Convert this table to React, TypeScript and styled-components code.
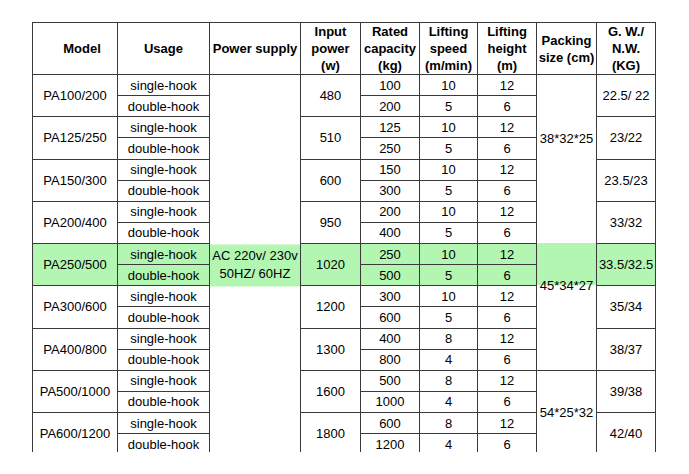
import React from 'react';
import styled, { createGlobalStyle } from 'styled-components';

const GlobalStyle = createGlobalStyle`
    html, body {
        margin: 0;
        padding: 0;
        background: #ffffff;
    }
    body {
        font-family: "Liberation Sans", Arial, sans-serif;
        color: #000;
    }
`;

const ROW_H = 21.125;
const GREEN = '#b2f6b2';
const LINE = '1px solid #3a3a3a';

const Page = styled.div`
    padding: 22px 0 0 32px;
    height: 452px;
    box-sizing: border-box;
    overflow: hidden;
`;

const Sheet = styled.table`
    border-collapse: collapse;
    table-layout: fixed;
    width: 623px;
    font-size: 13px;
`;

const HeadRow = styled.tr`
    height: 52px;
`;

const BodyRow = styled.tr`
    height: ${ROW_H}px;
`;

type HeadProps = {
    $indent?: number;
};

const Head = styled.th<HeadProps>`
    border: ${LINE};
    font-weight: bold;
    line-height: 17px;
    padding: 0 0 0 ${p => p.$indent ?? 0}px;
    text-align: center;
    vertical-align: middle;
    white-space: nowrap;
`;

type CellProps = {
    $hl?: boolean;
    $band?: [number, number];
    $noBottom?: boolean;
    $noTop?: boolean;
};

const Cell = styled.td<CellProps>`
    border: ${LINE};
    ${p => p.$noBottom ? 'border-bottom-style: hidden;' : ''}
    ${p => p.$noTop ? 'border-top-style: hidden;' : ''}
    padding: 0;
    line-height: 15px;
    text-align: center;
    vertical-align: middle;
    white-space: nowrap;
    background: ${p => p.$band
        ? `linear-gradient(to bottom, transparent ${p.$band[0]}px, ${GREEN} ${p.$band[0]}px, ${GREEN} ${p.$band[1]}px, transparent ${p.$band[1]}px)`
        : p.$hl ? GREEN : 'transparent'};
`;

const Supply = styled.span`
    display: inline-block;
    line-height: 18px;
`;

type Model = {
    name: string;
    power: string;
    cap: [string, string];
    speed: [string, string];
    height: [string, string];
    gw: string;
};

const models: Model[] = [
    { name: 'PA100/200', power: '480', cap: ['100', '200'], speed: ['10', '5'], height: ['12', '6'], gw: '22.5/ 22' },
    { name: 'PA125/250', power: '510', cap: ['125', '250'], speed: ['10', '5'], height: ['12', '6'], gw: '23/22' },
    { name: 'PA150/300', power: '600', cap: ['150', '300'], speed: ['10', '5'], height: ['12', '6'], gw: '23.5/23' },
    { name: 'PA200/400', power: '950', cap: ['200', '400'], speed: ['10', '5'], height: ['12', '6'], gw: '33/32' },
    { name: 'PA250/500', power: '1020', cap: ['250', '500'], speed: ['10', '5'], height: ['12', '6'], gw: '33.5/32.5' },
    { name: 'PA300/600', power: '1200', cap: ['300', '600'], speed: ['10', '5'], height: ['12', '6'], gw: '35/34' },
    { name: 'PA400/800', power: '1300', cap: ['400', '800'], speed: ['8', '4'], height: ['12', '6'], gw: '38/37' },
    { name: 'PA500/1000', power: '1600', cap: ['500', '1000'], speed: ['8', '4'], height: ['12', '6'], gw: '39/38' },
    { name: 'PA600/1200', power: '1800', cap: ['600', '1200'], speed: ['8', '4'], height: ['12', '6'], gw: '42/40' },
];

// packing sizes are merged over several model groups
const packing = [
    { text: '38*32*25', from: 0, groups: 3 },
    { text: '45*34*27', from: 3, groups: 4 },
    { text: '54*25*32', from: 7, groups: 2 },
];

const HIGHLIGHT = 4;
const widths = [85, 92, 91, 60, 59, 58, 59, 60, 59];

const bandIn = (fromGroup: number): [number, number] => {
    const offset = (HIGHLIGHT - fromGroup) * 2 * ROW_H;
    return [offset, offset + 2 * ROW_H];
};

const App: React.FC = () => {
    const rows: React.ReactNode[] = [];

    models.forEach((m, g) => {
        const hl = g === HIGHLIGHT;
        const pack = packing.find(p => p.from === g);
        const packIdx = pack ? packing.indexOf(pack) : -1;

        for (let sub = 0; sub < 2; sub++) {
            rows.push(
                <BodyRow key={`${m.name}-${sub}`}>
                    {sub === 0 && <Cell rowSpan={2} $hl={hl}>{m.name}</Cell>}
                    <Cell $hl={hl}>{sub === 0 ? 'single-hook' : 'double-hook'}</Cell>
                    {g === 0 && sub === 0 && (
                        <Cell rowSpan={models.length * 2} $band={bandIn(0)}>
                            <Supply>AC 220v/ 230v<br />50HZ/ 60HZ</Supply>
                        </Cell>
                    )}
                    {sub === 0 && <Cell rowSpan={2} $hl={hl}>{m.power}</Cell>}
                    <Cell $hl={hl}>{m.cap[sub]}</Cell>
                    <Cell $hl={hl}>{m.speed[sub]}</Cell>
                    <Cell $hl={hl}>{m.height[sub]}</Cell>
                    {pack && sub === 0 && (
                        <Cell
                            rowSpan={pack.groups * 2}
                            $noBottom={packIdx === 0}
                            $noTop={packIdx === 1}
                            $band={HIGHLIGHT >= pack.from && HIGHLIGHT < pack.from + pack.groups ? bandIn(pack.from) : undefined}
                        >
                            {pack.text}
                        </Cell>
                    )}
                    {sub === 0 && <Cell rowSpan={2} $hl={hl}>{m.gw}</Cell>}
                </BodyRow>
            );
        }
    });

    return (
        <>
            <GlobalStyle />
            <Page>
                <Sheet>
                    <colgroup>
                        {widths.map((w, i) => <col key={i} style={{ width: w }} />)}
                    </colgroup>
                    <thead>
                        <HeadRow>
                            <Head $indent={14}>Model</Head>
                            <Head>Usage</Head>
                            <Head>Power supply</Head>
                            <Head>Input<br />power<br />(w)</Head>
                            <Head>Rated<br />capacity<br />(kg)</Head>
                            <Head>Lifting<br />speed<br />(m/min)</Head>
                            <Head>Lifting<br />height<br />(m)</Head>
                            <Head>Packing<br />size (cm)</Head>
                            <Head>G. W./<br />N.W.<br />(KG)</Head>
                        </HeadRow>
                    </thead>
                    <tbody>{rows}</tbody>
                </Sheet>
            </Page>
        </>
    );
};

export default App;
